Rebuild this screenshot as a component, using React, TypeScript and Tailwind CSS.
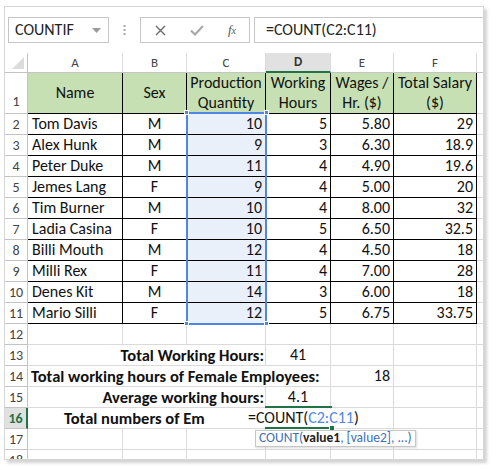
import React from "react";

const rows: [string, string, number, number, string, string][] = [
  ["Tom Davis", "M", 10, 5, "5.80", "29"],
  ["Alex Hunk", "M", 9, 3, "6.30", "18.9"],
  ["Peter Duke", "M", 11, 4, "4.90", "19.6"],
  ["Jemes Lang", "F", 9, 4, "5.00", "20"],
  ["Tim Burner", "M", 10, 4, "8.00", "32"],
  ["Ladia Casina", "F", 10, 5, "6.50", "32.5"],
  ["Billi Mouth", "M", 12, 4, "4.50", "18"],
  ["Milli Rex", "F", 11, 4, "7.00", "28"],
  ["Denes Kit", "M", 14, 3, "6.00", "18"],
  ["Mario Silli", "F", 12, 5, "6.75", "33.75"],
];

const FONT = { fontFamily: "Carlito, Calibri, Lato, 'Open Sans', sans-serif" };

// plain grid cell + bordered table cell
const g = "h-[21px] border-r border-b border-[#dadada] flex items-center whitespace-nowrap";
const t = "h-[21px] border-r border-b border-black flex items-center whitespace-nowrap text-[16px]";
const rh = "h-[21px] border-r border-b border-[#c4c4c4] flex items-center justify-center text-[14px] text-[#444]";

function RowNum({ n, active }: { n: number; active?: boolean }) {
  if (active) {
    return (
      <div className="h-[21px] border-r-2 border-r-[#217346] border-b border-b-[#c4c4c4] bg-[#e1e1e1] flex items-center justify-center text-[14px] text-[#217346] font-semibold">
        {n}
      </div>
    );
  }
  return <div className={rh}>{n}</div>;
}

function EmptyRow({ n }: { n: number }) {
  return (
    <>
      <RowNum n={n} />
      <div className={g} />
      <div className={g} />
      <div className={g} />
      <div className={g} />
      <div className={g} />
      <div className={g} />
      <div className="h-[21px] border-b border-[#dadada]" />
    </>
  );
}

export default function App() {
  return (
    <div className="w-[499px] h-[470px] bg-white text-[#111] pt-[6px] pl-[4px]" style={FONT}>
      <div className="w-[480px] h-[454px] border border-[#d6d6d6] bg-white overflow-hidden shadow-[3px_3px_3px_rgba(0,0,0,0.18)]">
        {/* formula bar */}
        <div className="h-[46px] flex items-start pt-[10px] pl-[3px]">
          <div className="w-[101px] h-[26px] border border-[#c6c6c6] flex items-center justify-between pl-[6px] pr-[7px]">
            <span className="text-[16px] text-[#222]">COUNTIF</span>
            <svg width="9" height="5" viewBox="0 0 9 5">
              <path d="M0 0h9L4.5 5z" fill="#9a9a9a" />
            </svg>
          </div>
          <div className="w-[31px] h-[26px] flex items-center justify-center">
            <svg width="3" height="10" viewBox="0 0 3 10">
              <rect x="0.5" y="0" width="2" height="2" fill="#a8a8a8" />
              <rect x="0.5" y="4" width="2" height="2" fill="#a8a8a8" />
              <rect x="0.5" y="8" width="2" height="2" fill="#a8a8a8" />
            </svg>
          </div>
          <div className="w-[110px] h-[26px] border border-[#c6c6c6] flex items-center">
            <div className="w-[38px] flex justify-center">
              <svg width="11" height="11" viewBox="0 0 11 11">
                <path d="M1 1l9 9M10 1l-9 9" stroke="#6a6a6a" strokeWidth="1.4" />
              </svg>
            </div>
            <div className="w-[36px] flex justify-center">
              <svg width="14" height="11" viewBox="0 0 14 11">
                <path d="M1 5.5l4 4L13 1" stroke="#a9a9a9" strokeWidth="2.2" fill="none" />
              </svg>
            </div>
            <div className="w-[34px] flex justify-center">
              <span className="italic text-[13px] text-[#555]" style={{ fontFamily: "'Liberation Serif', serif" }}>
                f<span className="text-[10px]">x</span>
              </span>
            </div>
          </div>
          <div className="ml-[4px] flex-1 h-[26px] border-t border-b border-l border-[#c6c6c6] flex items-center pl-[11px]">
            <span className="text-[16px] text-[#222]">=COUNT(C2:C11)</span>
          </div>
        </div>

        {/* sheet */}
        <div className="relative grid grid-cols-[23px_95px_64px_79px_65px_63px_83px_1fr]">
          {/* column headers */}
          <div className="h-[20px] border-r border-b border-[#c4c4c4] relative">
            <svg className="absolute right-[3px] bottom-[3px]" width="12" height="12" viewBox="0 0 12 12">
              <path d="M12 0v12H0z" fill="#dcdcdc" />
            </svg>
          </div>
          {["A", "B", "C"].map((c) => (
            <div key={c} className="h-[20px] border-r border-b border-r-[#dadada] border-b-[#c4c4c4] flex items-center justify-center text-[13px] text-[#444]">
              {c}
            </div>
          ))}
          <div className="h-[20px] border-r border-r-[#dadada] border-b-2 border-b-[#217346] bg-[#e1e1e1] flex items-center justify-center text-[13px] font-bold text-[#333]">
            D
          </div>
          {["E", "F"].map((c) => (
            <div key={c} className="h-[20px] border-r border-b border-r-[#dadada] border-b-[#c4c4c4] flex items-center justify-center text-[13px] text-[#444]">
              {c}
            </div>
          ))}
          <div className="h-[20px] border-b border-[#c4c4c4]" />

          {/* row 1 */}
          <div className="h-[41px] border-r border-b border-[#c4c4c4] flex items-end justify-center pb-[1px] text-[14px] text-[#444]">1</div>
          <div className="h-[41px] border-r border-b border-black bg-[#c6e0b4] flex items-center justify-center text-[16px]">Name</div>
          <div className="h-[41px] border-r border-b border-black bg-[#c6e0b4] flex items-center justify-center text-[16px]">Sex</div>
          <div className="h-[41px] border-r border-b border-black bg-[#c6e0b4] flex items-center justify-center text-center text-[16px] leading-[20px]">
            Production<br />Quantity
          </div>
          <div className="h-[41px] border-r border-b border-black bg-[#c6e0b4] flex items-center justify-center text-center text-[16px] leading-[20px]">
            Working<br />Hours
          </div>
          <div className="h-[41px] border-r border-b border-black bg-[#c6e0b4] flex items-center justify-center text-center text-[16px] leading-[20px]">
            Wages /<br />Hr. ($)
          </div>
          <div className="h-[41px] border-r border-b border-black bg-[#c6e0b4] flex items-center justify-center text-center text-[16px] leading-[20px] whitespace-nowrap">
            Total Salary<br />($)
          </div>
          <div className="h-[41px] border-b border-[#dadada]" />

          {/* data rows */}
          {rows.map((r, i) => (
            <React.Fragment key={r[0]}>
              <RowNum n={i + 2} />
              <div className={`${t} pl-[4px]`}>{r[0]}</div>
              <div className={`${t} justify-center`}>{r[1]}</div>
              <div className={`${t} justify-end pr-[3px] bg-[#eaf0fa]`}>{r[2]}</div>
              <div className={`${t} justify-end pr-[3px]`}>{r[3]}</div>
              <div className={`${t} justify-end pr-[3px]`}>{r[4]}</div>
              <div className={`${t} justify-end pr-[3px]`}>{r[5]}</div>
              <div className="h-[21px] border-b border-[#dadada]" />
            </React.Fragment>
          ))}

          <EmptyRow n={12} />

          {/* row 13 */}
          <RowNum n={13} />
          <div className={`${g} col-span-3 justify-end pr-[1px] text-[16.5px] font-bold`}>Total Working Hours:</div>
          <div className={`${g} justify-center text-[16px]`}>41</div>
          <div className={g} />
          <div className={g} />
          <div className="h-[21px] border-b border-[#dadada]" />

          {/* row 14 */}
          <RowNum n={14} />
          <div className={`${g} col-span-4 pl-[3px] text-[16.5px] font-bold`}>Total working hours of Female Employees:</div>
          <div className={`${g} justify-end pr-[3px] text-[16px]`}>18</div>
          <div className={g} />
          <div className="h-[21px] border-b border-[#dadada]" />

          {/* row 15 */}
          <RowNum n={15} />
          <div className={`${g} col-span-3 justify-end pr-[1px] text-[16.5px] font-bold`}>Average working hours:</div>
          <div className={`${g} justify-center text-[16px]`}>4.1</div>
          <div className={g} />
          <div className={g} />
          <div className="h-[21px] border-b border-[#dadada]" />

          {/* row 16 */}
          <RowNum n={16} active />
          <div className={`${g} col-span-3 pl-[36px] text-[16.5px] font-bold`}>Total numbers of Em</div>
          <div className={g} />
          <div className={g} />
          <div className={g} />
          <div className="h-[21px] border-b border-[#dadada]" />

          <EmptyRow n={17} />
          <EmptyRow n={18} />

          {/* reference highlight C2:C11 */}
          <div className="absolute left-[181px] top-[59px] w-[81px] h-[213px] border-2 border-[#4f86e3] pointer-events-none" />
          <div className="absolute left-[179px] top-[57px] w-[5px] h-[5px] bg-[#4f86e3] border border-white" />
          <div className="absolute left-[259px] top-[57px] w-[5px] h-[5px] bg-[#4f86e3] border border-white" />
          <div className="absolute left-[179px] top-[268px] w-[5px] h-[5px] bg-[#4f86e3] border border-white" />
          <div className="absolute left-[259px] top-[268px] w-[5px] h-[5px] bg-[#4f86e3] border border-white" />

          {/* cell in edit mode D16 */}
          <div className="absolute left-[240px] top-[356px] w-[112px] h-[18px] bg-white flex items-center pl-[3px] text-[16px] whitespace-nowrap">
            =COUNT(<span className="text-[#4f86e3]">C2:C11</span>)
          </div>
          <div className="absolute left-[260px] top-[353px] w-[67px] h-[2px] bg-[#217346]" />
          <div className="absolute left-[260px] top-[374px] w-[67px] h-[2px] bg-[#217346]" />
          <div className="absolute left-[324px] top-[372px] w-[6px] h-[6px] bg-[#217346] border border-white" />

          {/* function tooltip */}
          <div className="absolute left-[250px] top-[377px] h-[17px] px-[3px] bg-white border border-[#c6c6c6] shadow-[1px_1px_2px_rgba(0,0,0,0.15)] flex items-center text-[13.5px] text-[#3c6fb4] whitespace-nowrap">
            COUNT(<span className="font-bold text-[#222]">value1</span>, [value2], ...)
          </div>
        </div>
      </div>
    </div>
  );
}
